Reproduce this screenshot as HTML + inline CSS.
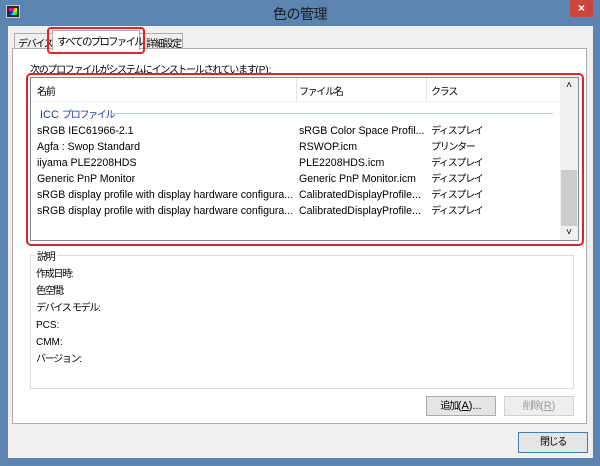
<!DOCTYPE html><html><head><meta charset="utf-8"><style>
*{margin:0;padding:0;box-sizing:border-box}
body{width:600px;height:466px;background:#5b84b1;position:relative;overflow:hidden;font-family:"Liberation Sans","Noto Sans CJK JP",sans-serif;font-size:11px;color:#000}
.a{position:absolute;white-space:nowrap}
.j{letter-spacing:-1.3px;font-size:10px}
.l{font-size:10.6px}
</style></head><body>
<div class="a" style="left:6px;top:5px;width:14px;height:13px;background:#2a2a2a;border:1px solid #ccc"><div style="margin:2px;width:8px;height:7px;background:conic-gradient(red,yellow,lime,cyan,blue,magenta,red)"></div></div>
<div class="a" style="left:0;width:600px;top:4px;text-align:center;font-size:14px;color:#1a1a1a;letter-spacing:-0.5px">色の管理</div>
<div class="a" style="left:570px;top:0;width:23px;height:17px;background:#c9463d;color:#fff;text-align:center;font-size:12px;line-height:17px;font-weight:bold">×</div>
<div class="a" style="left:8px;top:26px;width:585px;height:432px;background:#f0f0f0"></div>
<div class="a j" style="left:14px;top:33px;width:40px;height:16px;border:1px solid #adadad;background:#f0f0f0;padding:1px 3px;overflow:hidden">デバイス</div>
<div class="a j" style="left:138px;top:33px;width:45px;height:16px;border:1px solid #adadad;background:#f0f0f0;padding:1px 0 0 7px">詳細設定</div>
<div class="a" style="left:12px;top:48px;width:575px;height:376px;background:#fff;border:1px solid #adadad"></div>
<div class="a j" style="left:52px;top:30px;width:88px;height:20px;border:1px solid #adadad;border-bottom:none;background:#fff;padding:3px 4px;font-size:10.5px;letter-spacing:-1.8px">すべてのプロファイル</div>
<div class="a" style="left:47px;top:27px;width:98px;height:27px;border:2px solid #e8202a;border-radius:4px"></div>
<div class="a j" style="left:30px;top:61px">次のプロファイルがシステムにインストールされています<span style="letter-spacing:0">(P):</span></div>
<div class="a" style="left:30px;top:77px;width:549px;height:164px;border:1px solid #828790;background:#fff;overflow:hidden">
 <div class="a" style="left:0;top:0;width:529px;height:24px;background:#fff;border-bottom:1px solid #f0f0f0"></div>
 <div class="a j" style="left:6px;top:5px">名前</div>
 <div class="a j" style="left:268px;top:5px">ファイル名</div>
 <div class="a j" style="left:400px;top:5px">クラス</div>
 <div class="a" style="left:265px;top:0;width:1px;height:24px;background:#e5e5e5"></div>
 <div class="a" style="left:395px;top:0;width:1px;height:24px;background:#e5e5e5"></div>
 <div class="a" style="left:9px;top:28px;color:#1e3ca0">ICC <span class="j">プロファイル</span></div>
 <div class="a" style="left:80px;top:35px;width:442px;height:1px;background:#b9c8e0"></div>
 <div class="a l" style="left:6px;top:45px;line-height:16px">sRGB IEC61966-2.1<br>Agfa : Swop Standard<br>iiyama PLE2208HDS<br>Generic PnP Monitor<br>sRGB display profile with display hardware configura...<br>sRGB display profile with display hardware configura...</div>
 <div class="a l" style="left:268px;top:45px;line-height:16px">sRGB Color Space Profil...<br>RSWOP.icm<br>PLE2208HDS.icm<br>Generic PnP Monitor.icm<br>CalibratedDisplayProfile...<br>CalibratedDisplayProfile...</div>
 <div class="a j" style="left:400px;top:46px;line-height:16px">ディスプレイ<br>プリンター<br>ディスプレイ<br>ディスプレイ<br>ディスプレイ<br>ディスプレイ</div>
 <div class="a" style="left:529px;top:0;width:18px;height:162px;background:#f0f0f0"></div>
 <div class="a" style="left:529px;top:2px;width:18px;text-align:center;font-size:10px">˄</div>
 <div class="a" style="left:530px;top:92px;width:16px;height:56px;background:#cdcdcd"></div>
 <div class="a" style="left:529px;top:149px;width:18px;text-align:center;font-size:10px">˅</div>
</div>
<div class="a" style="left:26px;top:73px;width:558px;height:173px;border:2px solid #e8202a;border-radius:5px"></div>
<div class="a" style="left:30px;top:255px;width:544px;height:134px;border:1px solid #dcdcdc"></div>
<div class="a j" style="left:35px;top:248px;background:#fff;padding:0 3px 0 2px">説明</div>
<div class="a j" style="left:36px;top:266px;line-height:17px">作成日時:<br>色空間:<br>デバイス モデル:<br><span style="letter-spacing:0">PCS:</span><br><span style="letter-spacing:0">CMM:</span><br>バージョン:</div>
<div class="a" style="left:426px;top:396px;width:70px;height:20px;border:1px solid #acacac;background:#e5e5e5;text-align:center;line-height:18px"><span class="j">追加</span>(<u>A</u>)...</div>
<div class="a" style="left:504px;top:396px;width:70px;height:20px;border:1px solid #d0d0d0;background:#eee;text-align:center;line-height:18px;color:#9a9a9a"><span class="j">削除</span>(<u>R</u>)</div>
<div class="a j" style="left:518px;top:432px;width:70px;height:21px;border:1px solid #3c7fb1;background:#e5e5e5;text-align:center;line-height:19px">閉じる</div>
</body></html>
